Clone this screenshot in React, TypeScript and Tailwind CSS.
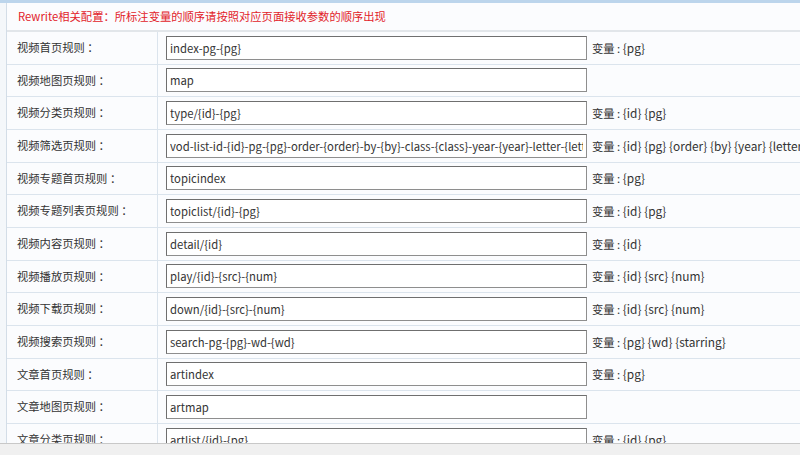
import React from "react"

type Rule = { label: string; value: string; vars?: string }

const rules: Rule[] = [
  { label: "视频首页规则", value: "index-pg-{pg}", vars: "{pg}" },
  { label: "视频地图页规则", value: "map" },
  { label: "视频分类页规则", value: "type/{id}-{pg}", vars: "{id} {pg}" },
  {
    label: "视频筛选页规则",
    value: "vod-list-id-{id}-pg-{pg}-order-{order}-by-{by}-class-{class}-year-{year}-letter-{letter}-area-{area}-lang-{lang}",
    vars: "{id} {pg} {order} {by} {year} {letter} {area} {lang} {class}",
  },
  { label: "视频专题首页规则", value: "topicindex", vars: "{pg}" },
  { label: "视频专题列表页规则", value: "topiclist/{id}-{pg}", vars: "{id} {pg}" },
  { label: "视频内容页规则", value: "detail/{id}", vars: "{id}" },
  { label: "视频播放页规则", value: "play/{id}-{src}-{num}", vars: "{id} {src} {num}" },
  { label: "视频下载页规则", value: "down/{id}-{src}-{num}", vars: "{id} {src} {num}" },
  { label: "视频搜索页规则", value: "search-pg-{pg}-wd-{wd}", vars: "{pg} {wd} {starring}" },
  { label: "文章首页规则", value: "artindex", vars: "{pg}" },
  { label: "文章地图页规则", value: "artmap" },
  { label: "文章分类页规则", value: "artlist/{id}-{pg}", vars: "{id} {pg}" },
]

const font = { fontFamily: '"Noto Sans CJK SC", "Liberation Sans", sans-serif' }

export default function App() {
  return (
    <div
      className="relative w-[800px] h-[455px] overflow-hidden bg-[#f4f7fa] text-[11.3px] text-[#333]"
      style={font}
    >
      <div className="h-[3px] bg-[#bcd5ec]" />
      <div className="ml-[6px] border-l border-[#d3dde7] bg-[#fbfcfe]">
        {/* header tip */}
        <div className="h-[29px] flex items-center pl-[11px] border-b-2 border-[#e2e6ea] text-[#e2232a] leading-none whitespace-nowrap">
          Rewrite相关配置：所标注变量的顺序请按照对应页面接收参数的顺序出现
        </div>

        {rules.map((r) => (
          <div key={r.label} className="flex h-[32.67px] border-b border-[#dbe4ed] whitespace-nowrap">
            <div className="w-[151px] shrink-0 flex items-center pl-[10px] border-r border-[#dbe4ed] leading-none">
              {r.label} ：
            </div>
            <div className="flex items-center pl-[8px] min-w-0">
              <input
                readOnly
                value={r.value}
                className="w-[421px] h-[24px] shrink-0 bg-white border border-[#8e8e8e] border-t-[#6f6f6f] border-l-[#6f6f6f] px-[3px] text-[11.3px] text-[#333] outline-none"
                style={font}
              />
              {r.vars && (
                <span className="ml-[5px] leading-none">
                  变量 : <span className="text-[11.9px]">{r.vars}</span>
                </span>
              )}
            </div>
          </div>
        ))}
      </div>

      {/* bottom bar */}
      <div className="absolute left-0 right-0 bottom-0 h-[12px] bg-[#f0f0f0] border-t border-[#c8c8c8]" />
    </div>
  )
}
